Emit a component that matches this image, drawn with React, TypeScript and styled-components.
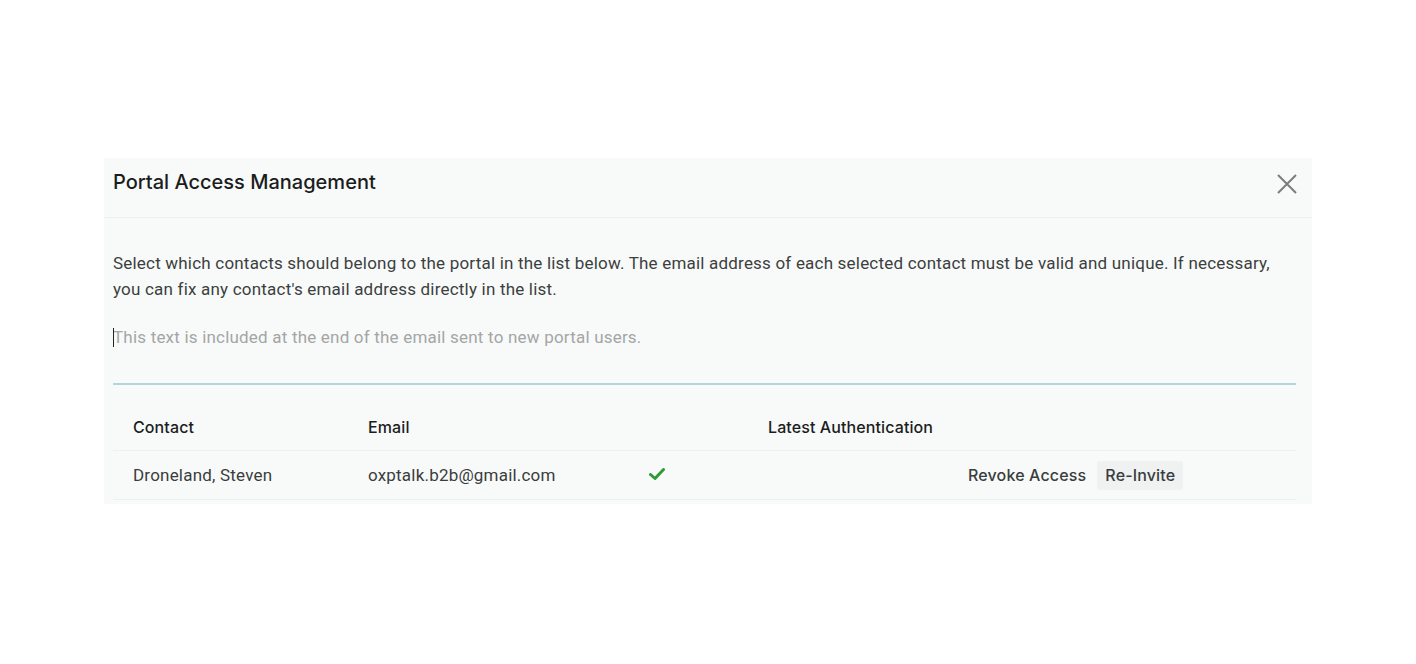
import React from 'react'
import styled, { createGlobalStyle } from 'styled-components'

const GlobalStyle = createGlobalStyle`
  html, body {
    margin: 0;
    padding: 0;
    background: #ffffff;
    font-family: Roboto, "Liberation Sans", sans-serif;
  }
`

const Page = styled.div`
  width: 1416px;
  height: 664px;
  padding-top: 158px;
  padding-left: 104px;
  box-sizing: border-box;
`

const Modal = styled.div`
  width: 1208px;
  background: #f8faf9;
  box-sizing: border-box;
`

const Header = styled.div`
  display: flex;
  align-items: flex-start;
  justify-content: space-between;
  height: 60px;
  padding: 12px 14px 0 9px;
  box-sizing: border-box;
  border-bottom: 1px solid #eef1ef;
`

const Title = styled.h1`
  margin: 0;
  font-family: Inter, Roboto, sans-serif;
  font-size: 20px;
  line-height: 24px;
  font-weight: 500;
  color: #1b1d1d;
`

const CloseButton = styled.button`
  border: none;
  background: none;
  padding: 0;
  margin-top: 3px;
  width: 22px;
  height: 22px;
  cursor: pointer;
  color: #7a7d7d;
`

const Body = styled.div`
  padding: 32px 16px 4px 9px;
`

const Description = styled.p`
  margin: 0;
  font-size: 17px;
  letter-spacing: 0.2px;
  line-height: 26px;
  color: #3c3f40;
`

const MessageField = styled.div`
  margin-top: 22px;
  padding-bottom: 33px;
  border-bottom: 2px solid #b3d7d8;
  font-size: 17px;
  letter-spacing: 0.2px;
  line-height: 26px;
  color: #a3a6a6;
  position: relative;
  &::before {
    content: '';
    position: absolute;
    left: 0;
    top: 4px;
    width: 1px;
    height: 19px;
    background: #222;
  }
`

const Row = styled.div<{ $head?: boolean }>`
  display: grid;
  grid-template-columns: 235px 281px 119px 200px 1fr;
  align-items: center;
  height: ${({ $head }) => ($head ? '66px' : '49px')};
  padding-top: ${({ $head }) => ($head ? '19px' : '0')};
  box-sizing: border-box;
  border-bottom: 1px solid #edf0ee;
  font-size: ${({ $head }) => ($head ? '16px' : '17px')};
  letter-spacing: ${({ $head }) => ($head ? '0.1px' : '0.2px')};
  color: ${({ $head }) => ($head ? '#1c1e1e' : '#3a3d3d')};
  font-weight: ${({ $head }) => ($head ? 500 : 400)};
  font-family: ${({ $head }) => ($head ? 'Inter, Roboto, sans-serif' : 'Roboto, sans-serif')};
`

const Cell = styled.div<{ $pad?: number }>`
  padding-left: ${({ $pad }) => $pad ?? 20}px;
  white-space: nowrap;
`

const Actions = styled.div`
  display: flex;
  gap: 3px;
  padding-left: 12px;
`

const ActionButton = styled.button<{ $filled?: boolean }>`
  border: none;
  border-radius: 3px;
  background: ${({ $filled }) => ($filled ? '#eff2f1' : 'transparent')};
  padding: 4px 8px;
  font-family: Inter, Roboto, sans-serif;
  font-size: 16px;
  font-weight: 500;
  letter-spacing: 0.15px;
  line-height: 21px;
  color: #3a3d3e;
  cursor: pointer;
`

const Check = () => (
  <svg width="16" height="14" viewBox="0 0 16 14">
    <path d="M1.5 7.5 L6 11.5 L14.5 2.5" fill="none" stroke="#2e9b35" strokeWidth="3" strokeLinecap="round" strokeLinejoin="round" />
  </svg>
)

const App = () => (
  <>
    <GlobalStyle />
    <Page>
      <Modal>
        <Header>
          <Title>Portal Access Management</Title>
          <CloseButton aria-label="Close">
            <svg width="22" height="22" viewBox="0 0 22 22">
              <path d="M2 2 L20 20 M20 2 L2 20" stroke="currentColor" strokeWidth="2" />
            </svg>
          </CloseButton>
        </Header>
        <Body>
          <Description>
            Select which contacts should belong to the portal in the list below. The email address of each selected contact must be valid and unique. If necessary, you can fix any contact's email address directly in the list.
          </Description>
          <MessageField>This text is included at the end of the email sent to new portal users.</MessageField>
          <Row $head>
            <Cell>Contact</Cell>
            <Cell>Email</Cell>
            <Cell />
            <Cell>Latest Authentication</Cell>
            <Cell />
          </Row>
          <Row>
            <Cell>Droneland, Steven</Cell>
            <Cell>oxptalk.b2b@gmail.com</Cell>
            <Cell>
              <Check />
            </Cell>
            <Cell />
            <Actions>
              <ActionButton>Revoke Access</ActionButton>
              <ActionButton $filled>Re-Invite</ActionButton>
            </Actions>
          </Row>
        </Body>
      </Modal>
    </Page>
  </>
)

export default App
